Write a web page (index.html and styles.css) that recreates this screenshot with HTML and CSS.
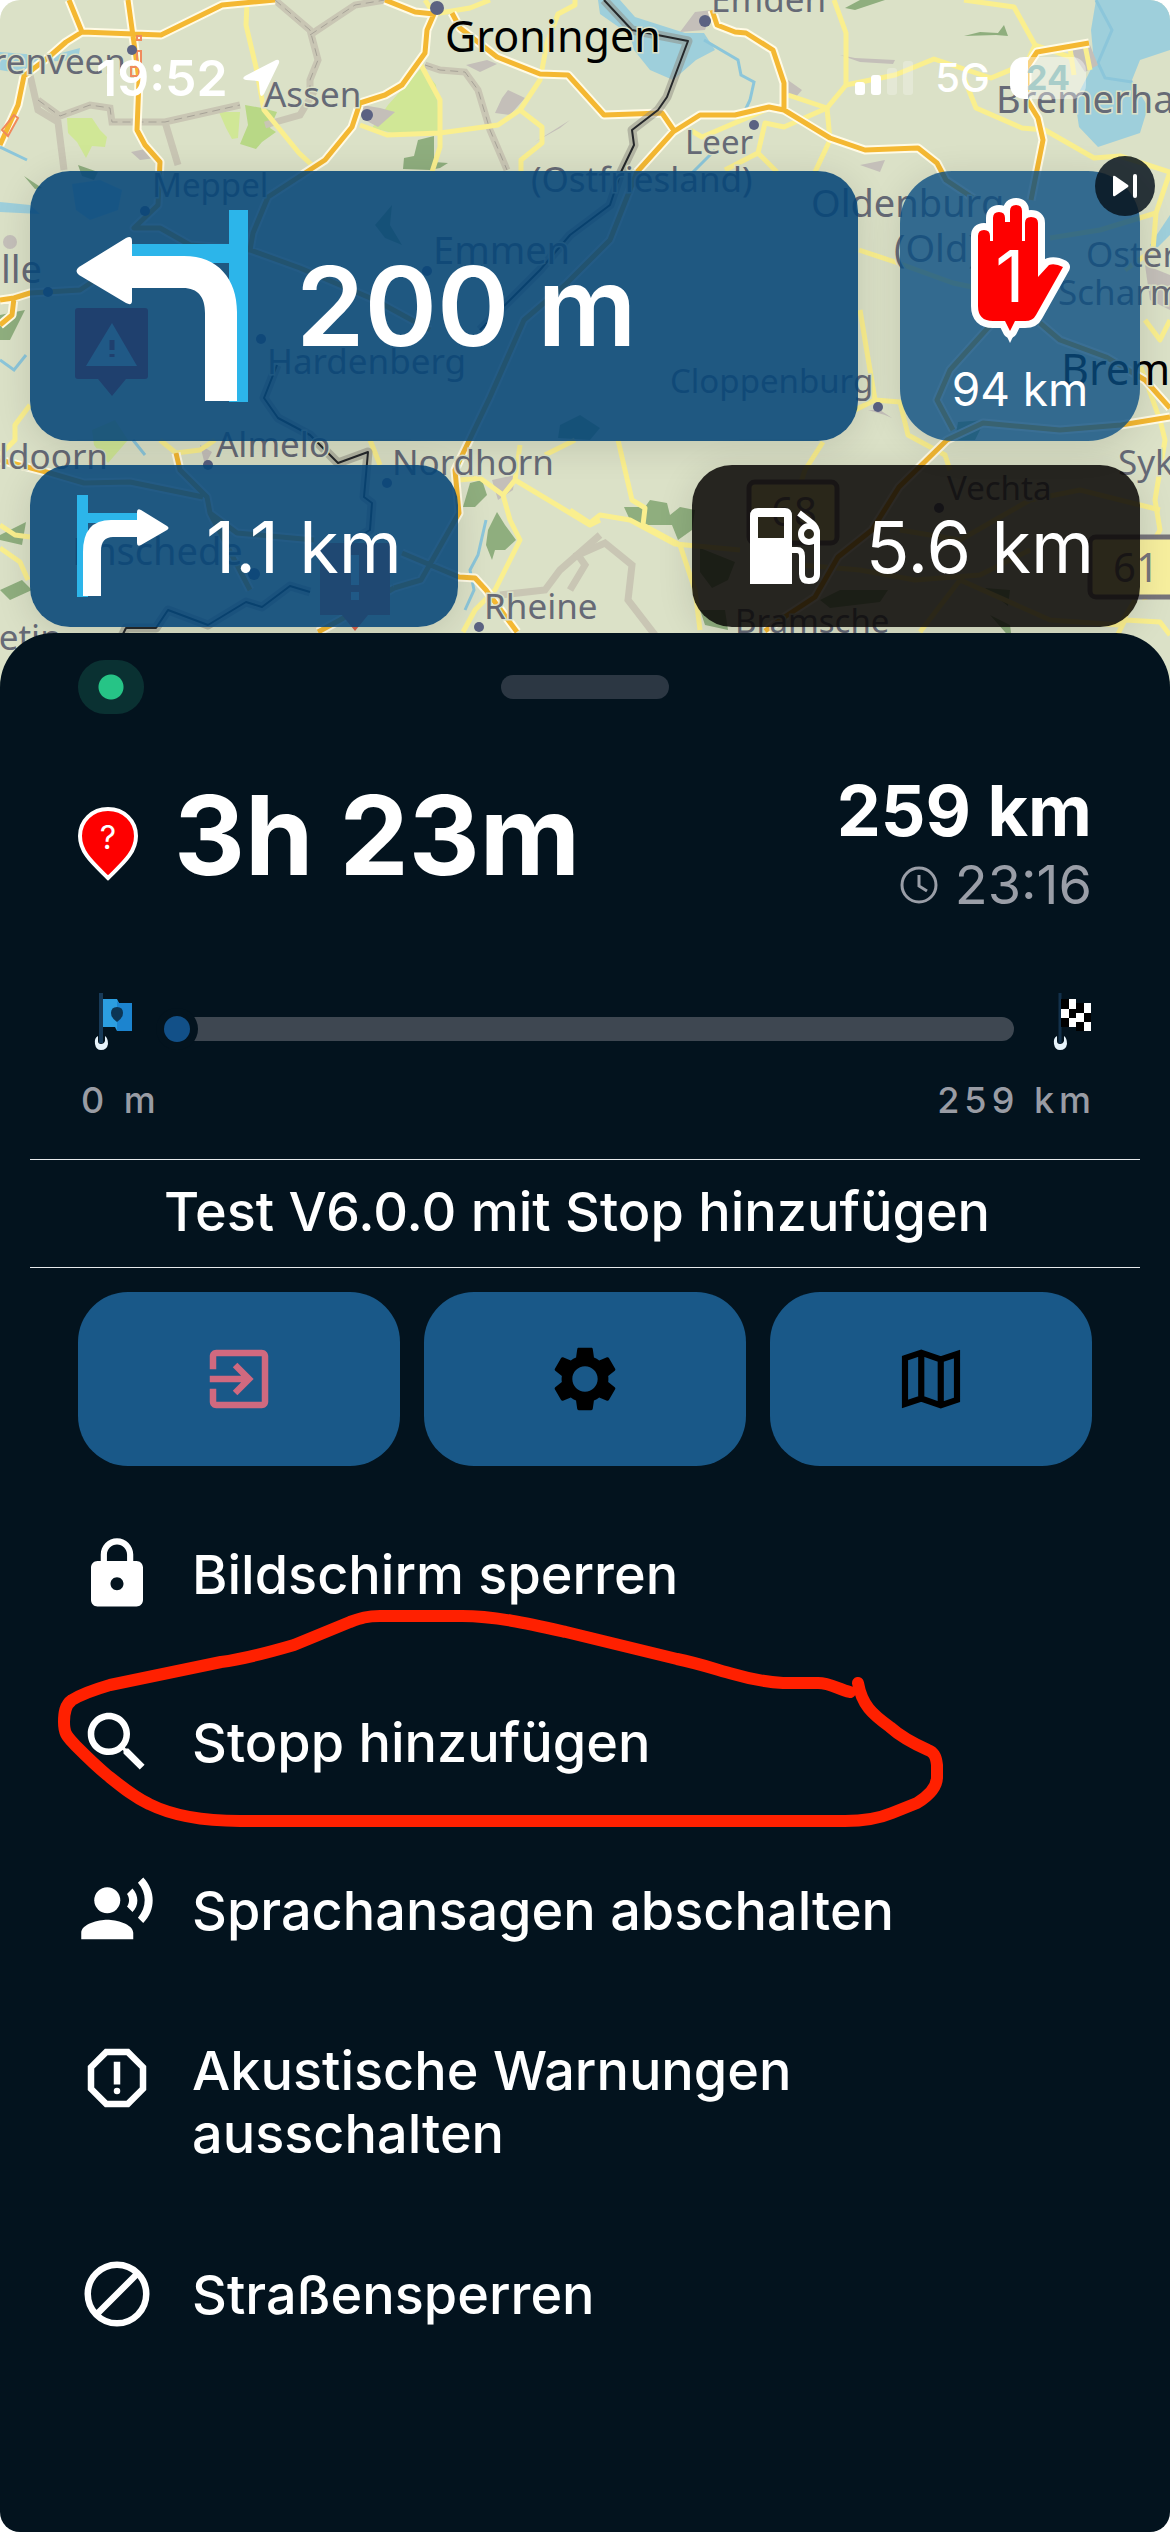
FILE: index.html
```html
<!DOCTYPE html>
<html lang="de">
<head>
    <meta charset="UTF-8">
    <meta name="viewport" content="width=device-width, initial-scale=1">
    <title>Navigation</title>
    <link rel="stylesheet" href="styles.css">
</head>
<body>
<div class="app">
    <!-- map -->
    <svg class="map" viewBox="0 0 1170 700" preserveAspectRatio="xMidYMin slice" aria-hidden="true">
        <defs>
            <path id="motorways" d="M69 0L82 32L134 34L161 35L222 5L275 0M82 32L66 42L50 56L24 76L18 105L0 145M128 0L134 43L139 80L137 130L145 145L160 162L158 205L134 228L160 228L190 245L250 250L300 268L375 300L430 330M385 0L415 12L434 14L427 30L425 53L402 85L385 95L360 103L352 127L325 160L268 197L253 233L250 250M452 13L460 28L497 57L540 74L568 75L604 115L662 113L675 132M637 172L673 132L700 115L735 115L769 107L784 110L830 138L865 150L918 148L937 163L946 180L976 200M712 10L717 25L735 32L746 33L773 50L784 83V110M637 172L610 240L565 285L524 320L490 397L455 470L459 513L421 580L394 588M1089 43L1037 52L1027 67V100L1038 118L1043 140L1031 200M765 631L780 620L815 597L838 557L872 530L899 487L947 440L983 423L1060 430L1121 425L1170 417M995 320L950 370L937 400L953 430M1040 323L1060 340L1106 357L1145 380L1170 408M0 460L50 473L84 483L130 482L203 497M176 453L180 470L207 497L210 513L237 533L314 540M210 513L250 590M402 553L459 577L475 578L486 590L517 632M318 632L340 620L394 588M0 300L14 298L30 293L80 290L110 270M14 298L12 315L0 325"/>
            <path id="border" d="M604 0L632 30L688 41L667 97L658 110L632 130L634 145L621 172L610 205L570 235L540 270L510 300L480 330M277 365L264 398L278 418L310 435L338 463L368 452L364 497L372 503L370 530L345 545M310 592L290 586L262 607L246 602L208 625L168 610L156 628L126 628L120 640"/>
        </defs>
        <rect width="1170" height="700" fill="#dbe1c7"/>
        <g fill="#9ecfdb">
            <path d="M1096 0H1170V50L1140 60L1132 80L1148 107L1140 133L1098 147L1079 127L1075 100L1087 77L1094 63L1091 30Z"/>
            <path d="M598 0H620L635 17L685 33L704 33L715 50L696 60L673 80L650 70L634 50L630 35L600 14Z"/>
            <path d="M0 52L50 56L80 48L78 60L40 62L24 74L0 70Z"/>
            <path d="M0 202L30 205L40 214L0 212Z"/>
            <path d="M72 184L100 180L122 190L118 210L90 220L76 210Z"/>
            <path d="M1150 245L1170 215V235L1155 250Z"/>
        </g>
        <g fill="none" stroke="#8cc6da" stroke-width="3">
            <path d="M704 40L738 60L741 75L754 82L750 100L742 117"/>
            <path d="M0 147L27 160M0 360L14 370L26 355M486 520L478 555L470 570L474 590L465 610"/>
            <path d="M715 150L690 175M133 440L145 455"/>
            <path d="M1096 0L1112 30L1098 63L1105 78L1132 82"/>
        </g>
        <g fill="#d0e796">
            <path d="M67 118L92 118L100 130L107 137L105 147L92 146L86 158L77 142L68 133Z"/>
            <path d="M422 67L436 85L440 132L405 136L372 128L388 105Z"/>
            <path d="M92 430L115 420L128 440L108 463L94 445Z"/>
            <path d="M219 112L240 112L238 138L232 139L226 128Z"/>
        </g>
        <g fill="#b8d886">
            <path d="M245 105L262 108L277 112L270 128L276 132L262 142L256 149L240 144L248 125Z"/>
        </g>
        <g fill="#8fae7e">
            <path d="M418 140L434 136L434 162L448 163L440 168L430 170L403 169L404 158L414 156Z"/>
            <path d="M24 176L42 188L35 189ZM78 165L98 172L94 180L82 176Z"/>
            <path d="M845 8L860 0H885L855 10ZM964 36L980 32L998 33L1004 25L1008 36L996 35Z"/>
            <path d="M463 507L470 483L482 480L487 495L475 507Z"/>
            <path d="M488 530L497 512L505 525L516 540L505 550H495L492 560L486 545Z"/>
            <path d="M624 507L645 507L650 500L667 503L670 515L680 507L695 510L692 530L678 540L672 525L645 525L630 520Z"/>
            <path d="M700 548L735 562L728 580L712 588L700 572Z"/>
            <path d="M0 535L26 522L22 545L0 540ZM0 590L22 580L32 590L10 600Z"/>
            <path d="M820 600L840 590L888 590L880 602L830 608ZM985 588L1010 590L1008 606Z"/>
            <path d="M700 610L725 610L728 630L705 625ZM990 615L1010 625L1012 640Z"/>
            <path d="M958 422L985 420L975 440L955 440Z"/>
            <path d="M0 315L25 310L10 340L0 340Z"/>
            <path d="M560 425L580 415L600 428L590 440L558 438Z"/>
            <path d="M375 225L392 205L390 225L402 245L385 238Z"/>
        </g>
        <g fill="#c4bfb9">
            <path d="M508 90L525 98L510 115L495 113L502 98ZM466 65L487 60L497 64L480 72Z"/>
            <path d="M535 142L570 120L560 128ZM131 152L150 148L155 158L140 160Z"/>
            <path d="M362 105L380 108L395 112L378 127L365 120Z"/>
            <path d="M785 78L802 90L795 98L786 92ZM840 55L855 58L895 60L893 64L860 62Z"/>
            <path d="M860 165L885 160L880 172Z"/>
            <path d="M680 32L695 12L712 10L705 30ZM1070 50L1090 45L1098 65L1085 72Z"/>
            <path d="M492 480L515 475L513 490L498 500ZM200 445L212 452L205 465ZM868 410L885 415L892 418L880 410Z"/>
            <path d="M1145 265L1170 275V310L1150 300Z"/>
            <circle cx="10" cy="242" r="7"/>
        </g>
        <!-- province borders -->
        <g fill="none" stroke="#c9c6b4" stroke-width="7">
            <path d="M275 0L310 30L318 60L310 80V95"/>
            <path d="M310 35L355 5L385 0M30 75L38 110L58 122L64 170"/>
            <path d="M38 100L60 116L90 105L110 108L112 122L165 122L240 105M165 122L178 165"/>
            <path d="M425 65L440 70L465 72L478 90L490 130L507 170M265 125L300 115L315 90"/>
            <path d="M570 590L585 565L578 555L605 543L632 565L628 600L655 635"/>
            <path d="M500 595L545 590L560 570L600 535"/>
        </g>
        <g fill="none" stroke="#a6a297" stroke-width="1" stroke-dasharray="8 5">
            <path d="M275 0L310 30L318 60L310 80V95M310 35L355 5L385 0"/>
            <path d="M38 100L60 116L90 105L110 108L112 122L165 122L240 105"/>
            <path d="M425 65L440 70L465 72L478 90L490 130L507 170"/>
        </g>
        <g class="yellow-roads">
            <path d="M247 3L246 25L256 67L264 110L299 153L314 167"/>
            <path d="M421 65L440 100V147L432 172"/>
            <path d="M360 125L387 135L440 133L498 125L520 110L540 80L547 43L558 14L575 5V0"/>
            <path d="M520 110L542 127V143L521 160V172"/>
            <path d="M425 0L434 14L470 8L490 0"/>
            <path d="M834 0L846 33V85L827 108L830 140L815 172"/>
            <path d="M846 85L895 75L934 59L991 78L1027 63"/>
            <path d="M788 95L827 108L784 127L765 123L758 153L777 172M758 153L725 170"/>
            <path d="M690 130L702 137L765 110"/>
            <path d="M964 0L1014 7L1035 45L1070 57M1035 45L1028 60"/>
            <path d="M964 78L976 108L1022 128L1045 130L1094 158L1120 156L1170 172L1156 213L1153 250L1125 270"/>
            <path d="M1070 48L1074 75M1085 45L1090 70"/>
            <path d="M859 250L895 262L953 283L1010 295M1050 238L1100 230L1156 213"/>
            <path d="M860 310L875 400L900 402L908 435L945 455L950 470"/>
            <path d="M823 442L805 470L795 500M875 400L855 410"/>
            <path d="M618 440L632 500L645 508L643 525L680 545L695 590L700 630"/>
            <path d="M570 510L590 523L600 515L630 520L675 544L740 550"/>
            <path d="M30 405L15 425V440L0 455M0 525L15 535L30 537M0 548L20 562L28 580"/>
            <path d="M160 440L176 453L200 450L215 440M370 440L380 465"/>
            <path d="M459 480L480 478L503 495L510 520L520 540L495 590L475 610L463 632"/>
            <path d="M503 495L515 480L565 510L590 525L600 520M515 480L520 445M545 455L575 440"/>
            <path d="M1140 365L1160 420L1165 440L1155 500L1160 530L1140 565L1145 600"/>
            <path d="M900 530L960 540L1030 500L1080 490L1160 510"/>
            <path d="M960 580L920 632M960 580L1050 620L1120 625L1135 600"/>
            <path d="M1110 650L1125 620L1160 622L1170 635"/>
            <path d="M800 565L860 570L915 580L980 575L1030 550"/>
            <path d="M1145 320L1160 340L1170 320"/>
        </g>
        <use href="#motorways" class="motorway-case"/>
        <use href="#motorways" class="motorway-fill"/>
        <use href="#border" class="border-glow"/>
        <use href="#border" class="border-line"/>
        <path d="M137 36H141V40H137ZM137 51H141V66H137ZM131 67H139V76H131ZM14 115L18 118L8 136L2 130Z" fill="none" stroke="#f08a5d" stroke-width="2"/>
        <g fill="#5b6282">
            <circle cx="132" cy="50" r="5"/>
            <circle cx="437" cy="8" r="7"/>
            <circle cx="367" cy="115" r="6"/>
            <circle cx="705" cy="21" r="6"/>
            <circle cx="754" cy="125" r="5"/>
            <circle cx="878" cy="407" r="5"/>
            <circle cx="208" cy="465" r="5"/>
            <circle cx="387" cy="483" r="5"/>
            <circle cx="939" cy="508" r="5"/>
            <circle cx="479" cy="627" r="5"/>
            <circle cx="145" cy="211" r="5"/>
            <circle cx="48" cy="292" r="5"/>
            <circle cx="261" cy="339" r="5"/>
            <circle cx="427" cy="271" r="5"/>
            <circle cx="254" cy="574" r="6"/>
        </g>
        <g class="shield">
            <rect x="749" y="482" width="88" height="61" rx="6"/>
            <rect x="1090" y="537" width="90" height="60" rx="6"/>
            <text x="771" y="526">68</text>
            <text x="1113" y="582">61</text>
        </g>
        <g class="town">
            <text x="126" y="74" text-anchor="end">Heerenveen</text>
            <text x="264" y="107">Assen</text>
            <text x="711" y="12">Emden</text>
            <text x="433" y="264" class="mid">Emmen</text>
            <text x="996" y="113" class="mid">Bremerhaven</text>
            <text x="811" y="217" class="mid">Oldenburg</text>
            <text x="894" y="262" class="mid">(Old)</text>
            <text x="42" y="283" text-anchor="end" class="mid">Zwolle</text>
            <text x="72" y="565" class="mid">Enschede</text>
            <text x="108" y="469" text-anchor="end">Apeldoorn</text>
            <text x="216" y="457">Almelo</text>
            <text x="267" y="374">Hardenberg</text>
            <text x="484" y="619">Rheine</text>
            <text x="685" y="154" class="small">Leer</text>
            <text x="531" y="192">(Ostfriesland)</text>
            <text x="152" y="197" class="small">Meppel</text>
            <text x="1086" y="267">Osterholz-</text>
            <text x="1058" y="305">Scharmbeck</text>
            <text x="670" y="393" class="small">Cloppenburg</text>
            <text x="392" y="475">Nordhorn</text>
            <text x="1118" y="475">Syke</text>
            <text x="947" y="500" class="small">Vechta</text>
            <text x="735" y="633" class="small">Bramsche</text>
            <text x="-48" y="650">Doetin</text>
            <text x="445" y="52" class="city">Groningen</text>
            <text x="1061" y="385" class="city">Bremen</text>
        </g>
        <!-- hazard pins -->
        <path d="M78 308H145Q148 308 148 311V376Q148 379 145 379H126L112 396L98 379H78Q75 379 75 376V311Q75 308 78 308Z" fill="#d8212a"/>
        <path d="M112 323L137 366H86Z" fill="#e4e8ec"/>
        <path d="M112 340V350M112 354V357" stroke="#d8212a" stroke-width="5"/>
        <path d="M320 543H390V615H368L355 631L342 615H320Z" fill="#d8604a"/>
        <path d="M355 555V585M355 592V600" stroke="#e4e8ec" stroke-width="8"/>
    </svg>

    <header class="status">
        <time class="status-time">19:52</time>
        <svg class="status-arrow" viewBox="0 0 38 38" aria-hidden="true"><path d="M34 1L3 17Q-1 20 4 21L16 22Q17 22 17 24L18 35Q19 39 22 35L37 4Q38 0 34 1Z" fill="#fff"/></svg>
        <svg class="status-signal" viewBox="0 0 60 36" fill="#fff" aria-hidden="true">
            <rect x="0" y="22" width="10" height="13" rx="3"/>
            <rect x="16" y="15" width="10" height="20" rx="3"/>
            <rect x="32" y="8" width="10" height="27" rx="3" opacity=".25"/>
            <rect x="48" y="1" width="10" height="34" rx="3" opacity=".25"/>
        </svg>
        <span class="status-net">5G</span>
        <span class="battery">24</span>
    </header>

    <section class="guidance">
        <div class="guidance-row">
            <div class="card next-turn">
                <svg class="turn-icon" viewBox="0 0 174 194" aria-hidden="true">
                    <path d="M153 1H172V193H153V54H56V35H153Z" fill="#2cb5ea"/>
                    <path d="M50 29Q56 26 56 32V47H108C142 47 161 70 161 103V192H129V104C129 88 122 79 107 79H56V92Q56 97 50 94L3 66Q-2 62 3 58Z" fill="#fff"/>
                </svg>
                <span class="turn-distance">200 m</span>
            </div>
            <div class="card stop-card">
                <svg class="hand-icon" viewBox="0 0 106 152" aria-hidden="true">
                    <path d="M11 42Q11 36 17 36Q23 36 23 42V47H26V24Q26 18 32 18Q38 18 38 24H43V17Q43 11 49 11Q55 11 55 17V47H58V29Q58 23 64 23Q71 23 71 29V83L82 71Q88 69 96 73L69 121Q66 127 58 127H48L43 137L38 127H26Q11 127 11 112Z" fill="#fff" stroke="#fff" stroke-width="14" stroke-linejoin="round"/>
                    <path d="M34 130L43 149L52 130Z" fill="#fff"/>
                    <path d="M11 42Q11 36 17 36Q23 36 23 42V47H26V24Q26 18 32 18Q38 18 38 24V28H43V17Q43 11 49 11Q55 11 55 17V47H58V29Q58 23 64 23Q71 23 71 29V83L82 71Q88 69 96 73L69 121Q66 127 58 127H48L43 137L38 127H26Q11 127 11 112Z" fill="#fe0000"/>
                    <text x="43" y="108" text-anchor="middle">1</text>
                </svg>
                <span class="stop-distance">94 km</span>
                <button class="skip" type="button" aria-label="Stopp überspringen">
                    <svg viewBox="0 0 60 60" aria-hidden="true"><path d="M18 21Q18 19 20 20L33 29Q34 30 33 31L20 40Q18 41 18 39Z" fill="#fff"/><path d="M40 20V40" stroke="#fff" stroke-width="4" stroke-linecap="round"/></svg>
                </button>
            </div>
        </div>
        <div class="guidance-row guidance-row-small">
            <div class="card then-turn">
                <svg class="then-icon" viewBox="0 0 94 102" aria-hidden="true">
                    <path d="M1 0H12V18H63V28H12V102H1Z" fill="#2cb5ea"/>
                    <path d="M61 17Q61 13 65 15L91 31Q94 33 91 35L65 50Q61 52 61 48V42H37Q25 42 25 56V101H7V57Q7 25 35 25H61Z" fill="#fff"/>
                </svg>
                <span>1.1 km</span>
            </div>
            <div class="card fuel">
                <svg class="fuel-icon" viewBox="0 0 70 76" aria-hidden="true">
                    <path d="M8 0H35Q42 0 42 8V76H0V8Q0 0 8 0ZM8 9V30H34V9Z" fill="#fff" fill-rule="evenodd"/>
                    <g fill="none" stroke="#fff" stroke-width="6">
                        <path d="M42 42H47Q52 42 52 48V66Q52 73 59 73Q67 73 67 66V25Q67 19 62 15L49 5"/>
                        <circle cx="59" cy="26" r="8"/>
                    </g>
                </svg>
                <span>5.6 km</span>
            </div>
        </div>
    </section>

    <main class="sheet">
        <div class="sheet-top">
            <span class="gps"></span>
            <span class="handle"></span>
        </div>

        <div class="summary">
            <svg class="pin" viewBox="0 0 60 74" aria-hidden="true">
                <path d="M30 2C46 2 58 14 58 29C58 46 44 57 30 71C16 57 2 46 2 29C2 14 14 2 30 2Z" fill="#fe0000" stroke="#fff" stroke-width="4"/>
                <text x="30" y="42" text-anchor="middle">?</text>
            </svg>
            <span class="duration">3h 23m</span>
            <div class="arrival">
                <div class="total">259 km</div>
                <div class="eta">
                    <svg viewBox="0 0 40 40" fill="none" stroke="currentColor" stroke-width="3" aria-hidden="true"><circle cx="20" cy="20" r="17"/><path d="M20 10V21L28 26"/></svg>
                    <time>23:16</time>
                </div>
            </div>
        </div>

        <div class="progress">
            <svg class="flag-start" viewBox="-3 0 60 72" aria-hidden="true">
                <path d="M20 0V50" stroke="#173a58" stroke-width="4"/>
                <path d="M22 6H36L38 10H51V38H36L34 34H22Z" fill="#2c9ee0"/>
                <path d="M36 8L38 10H51V38H36Z" fill="#1c84cf"/>
                <path d="M36 14Q42 14 42 20Q42 25 36 29Q30 25 30 20Q30 14 36 14Z" fill="#0c3554"/>
                <path d="M17 43Q13 45 14 51Q15 57 20 57Q26 57 27 51Q27 45 24 43V48Q23 51 20 51Q17 51 17 48Z" fill="#e8f4fb"/>
            </svg>
            <input class="track" type="range" min="0" max="259" value="0" aria-label="Zurückgelegte Strecke">
            <svg class="flag-end" viewBox="0 0 52 72" aria-hidden="true">
                <path d="M20 0V50" stroke="#12304a" stroke-width="3"/>
                <path d="M21 6H36V10H51V38H36V34H21Z" fill="#000"/>
                <path d="M29 6H36V16H29ZM21 16H29V25H21ZM29 25H36V34H29ZM44 10H51V20H44ZM36 20H44V29H36ZM44 29H51V38H44Z" fill="#fff"/>
                <path d="M17 43Q13 45 14 51Q15 57 20 57Q26 57 27 51Q27 45 24 43V48Q23 51 20 51Q17 51 17 48Z" fill="#e8f4fb"/>
            </svg>
        </div>
        <div class="progress-labels">
            <span>0 m</span>
            <span>259 km</span>
        </div>

        <h1 class="route-name">Test V6.0.0 mit Stop hinzufügen</h1>

        <div class="actions">
            <button class="action action-exit" type="button" aria-label="Beenden">
                <svg viewBox="0 0 24 24" aria-hidden="true"><path d="M10.09 15.59L11.5 17l5-5-5-5-1.41 1.41L12.67 11H3v2h9.67l-2.58 2.59zM19 3H5c-1.11 0-2 .9-2 2v4h2V5h14v14H5v-4H3v4c0 1.1.89 2 2 2h14c1.1 0 2-.9 2-2V5c0-1.1-.9-2-2-2z"/></svg>
            </button>
            <button class="action" type="button" aria-label="Einstellungen">
                <svg viewBox="0 0 24 24" aria-hidden="true"><path d="M19.14 12.94c.04-.3.06-.61.06-.94 0-.32-.02-.64-.07-.94l2.03-1.58c.18-.14.23-.41.12-.61l-1.92-3.32c-.12-.22-.37-.29-.59-.22l-2.39.96c-.5-.38-1.03-.7-1.62-.94l-.36-2.54c-.04-.24-.24-.41-.48-.41h-3.84c-.24 0-.43.17-.47.41l-.36 2.54c-.59.24-1.13.57-1.62.94l-2.39-.96c-.22-.08-.47 0-.59.22L2.74 8.87c-.12.21-.08.47.12.61l2.03 1.58c-.05.3-.09.63-.09.94s.02.64.07.94l-2.03 1.58c-.18.14-.23.41-.12.61l1.92 3.32c.12.22.37.29.59.22l2.39-.96c.5.38 1.03.7 1.62.94l.36 2.54c.05.24.24.41.48.41h3.84c.24 0 .44-.17.47-.41l.36-2.54c.59-.24 1.13-.56 1.62-.94l2.39.96c.22.08.47 0 .59-.22l1.92-3.32c.12-.22.07-.47-.12-.61l-2.01-1.58zM12 15.9c-2.15 0-3.9-1.75-3.9-3.9s1.75-3.9 3.9-3.9 3.9 1.75 3.9 3.9-1.75 3.9-3.9 3.9z"/></svg>
            </button>
            <button class="action" type="button" aria-label="Karte">
                <svg viewBox="0 0 24 24" fill="none" aria-hidden="true"><path d="M4 5.6L9 3.9L15 6L20 4.3V18.4L15 20.1L9 18L4 19.7ZM9 4V18M15 6V20" fill="none" stroke="#000" stroke-width="1.9"/></svg>
            </button>
        </div>

        <nav class="menu">
            <button class="menu-item" type="button">
                <svg viewBox="0 0 24 24" aria-hidden="true"><path d="M18 8h-1V6c0-2.76-2.24-5-5-5S7 3.24 7 6v2H6c-1.1 0-2 .9-2 2v10c0 1.1.9 2 2 2h12c1.1 0 2-.9 2-2V10c0-1.1-.9-2-2-2zm-6 9c-1.1 0-2-.9-2-2s.9-2 2-2 2 .9 2 2-.9 2-2 2zm3.1-9H8.9V6c0-1.71 1.39-3.1 3.1-3.1s3.1 1.39 3.1 3.1v2z"/></svg>
                <span>Bildschirm sperren</span>
            </button>
            <button class="menu-item" type="button">
                <svg viewBox="0 0 24 24" aria-hidden="true"><path d="M15.5 14h-.79l-.28-.27C15.41 12.59 16 11.11 16 9.5 16 5.91 13.09 3 9.5 3S3 5.91 3 9.5 5.91 16 9.5 16c1.61 0 3.09-.59 4.23-1.57l.27.28v.79l5 4.99L20.49 19l-4.99-5zm-6 0C7.01 14 5 11.99 5 9.5S7.01 5 9.5 5 14 7.01 14 9.5 11.99 14 9.5 14z"/></svg>
                <span>Stopp hinzufügen</span>
            </button>
            <button class="menu-item" type="button">
                <svg viewBox="0 0 24 24" aria-hidden="true"><circle cx="9" cy="9" r="4"/><path d="M9 15c-2.67 0-8 1.34-8 4v2h16v-2c0-2.66-5.33-4-8-4zm7.76-9.64l-1.68 1.69c.84 1.18.84 2.71 0 3.89l1.68 1.69c2.02-2.02 2.02-5.07 0-7.27zM20.07 2l-1.63 1.63c2.77 3.02 2.77 7.56 0 10.74L20.07 16c3.9-3.89 3.91-9.95 0-14z"/></svg>
                <span>Sprachansagen abschalten</span>
            </button>
            <button class="menu-item" type="button">
                <svg viewBox="0 0 24 24" aria-hidden="true"><path d="M15.73 3H8.27L3 8.27v7.46L8.27 21h7.46L21 15.73V8.27L15.73 3zM19 14.9L14.9 19H9.1L5 14.9V9.1L9.1 5h5.8L19 9.1v5.8z"/><circle cx="12" cy="16" r="1"/><path d="M11 7h2v7h-2z"/></svg>
                <span>Akustische Warnungen ausschalten</span>
            </button>
            <button class="menu-item" type="button">
                <svg viewBox="0 0 24 24" fill="none" aria-hidden="true"><path d="M18 6L6 18M21 12A9 9 0 1 1 3 12A9 9 0 1 1 21 12Z" fill="none" stroke="#fff" stroke-width="2"/></svg>
                <span>Straßensperren</span>
            </button>

            <!-- hand-drawn mark round the second entry -->
            <svg class="mark" viewBox="0 1490 1170 890" aria-hidden="true">
                <path d="M850 1692C838 1689 830 1683 818 1683H783C765 1682 750 1679 733 1674C715 1669 697 1663 677 1659L566 1632C530 1624 495 1616 462 1616H380C367 1616 361 1618 350 1622L294 1645C270 1652 245 1659 221 1662L110 1685C93 1690 80 1695 72 1700C65 1705 64 1713 64 1722C64 1735 68 1737 76 1746C90 1760 95 1765 107 1775C122 1787 134 1797 149 1804C175 1817 205 1821 240 1821H845C865 1821 880 1818 892 1813L917 1803C930 1795 937 1787 937 1777V1765C936 1755 933 1752 928 1750C910 1742 900 1736 890 1727C872 1714 862 1705 858 1683"/>
            </svg>
        </nav>
    </main>
</div>
</body>
</html>
```
FILE: styles.css
```css
*{
    box-sizing: border-box;
}
body{
    margin:0;
    background:#fff;
    color:#fff;
    font-family: Inter, "Liberation Sans", sans-serif;
}
button{
    border:0;
    padding:0;
    color:inherit;
    font:inherit;
    cursor:pointer;
}
svg{
    display:block;
    flex:none;
}
.app{
    position: relative;
    display:flex;
    flex-direction: column;
    min-height:100vh;
    border-radius:20px;
    overflow: hidden;
}

/* map */
.map{
    position: absolute;
    left:0;
    top:0;
    width:100%;
    height:700px;
}
.yellow-roads{
    fill:none;
    stroke:#faef8e;
    stroke-width:5px;
    stroke-linejoin:round;
}
.motorway-case, .motorway-fill{
    fill:none;
    stroke-linejoin:round;
}
.motorway-case{
    stroke:#fffbe6;
    stroke-width:9px;
}
.motorway-fill{
    stroke:#f4b832;
    stroke-width:5px;
}
.border-glow, .border-line{
    fill:none;
    stroke-linejoin:round;
}
.border-glow{
    stroke:#8d8b81;
    stroke-width:9px;
    opacity:.5;
}
.border-line{
    stroke:#25282a;
    stroke-width:2px;
}
.town{
    font-family:"Noto Sans", sans-serif;
    font-size:35px;
    fill:#666a76;
    stroke:#dbe1c7;
    stroke-width:3px;
    paint-order:stroke;
}
.town .small{
    font-size:33px;
}
.town .mid{
    font-size:38px;
}
.town .city{
    font-size:43px;
    fill:#000;
}
.shield{
    font-family:"Noto Sans", sans-serif;
    font-size:40px;
    fill:#77757a;
}
.shield rect{
    fill:#f7ef9e;
    stroke:#77757a;
    stroke-width:5px;
}

/* status bar */
.status{
    position: relative;
    display:flex;
    align-items: center;
    padding:48px 84px 63px 96px;
    line-height:60px;
}
.status-time{
    font-size:50px;
    font-weight:600;
}
.status-arrow{
    width:38px;
    height:38px;
    margin-left:14px;
}
.status-signal{
    width:60px;
    height:36px;
    margin-left:auto;
}
.status-net{
    margin:0 20px;
    font-size:40px;
    font-weight:500;
}
.battery{
    width:76px;
    height:42px;
    border-radius:14px;
    background:linear-gradient(90deg, #fff 24%, rgba(255,255,255,.4) 24%);
    color:#a9cdc9;
    font-size:34px;
    font-weight:700;
    line-height:42px;
    text-align:center;
}

/* turn cards */
.guidance{
    position: relative;
    padding:0 30px 6px;
}
.guidance-row{
    display:flex;
    gap:42px;
}
.guidance-row-small{
    justify-content: space-between;
    margin-top:24px;
}
.card{
    display:flex;
    align-items: center;
    border-radius:40px;
    background:rgba(5,68,120,.88);
    box-shadow:0 6px 36px rgba(0,0,0,.12);
}
.next-turn{
    flex:1;
    min-height:270px;
    padding:0 46px;
    gap:46px;
}
.turn-icon{
    width:174px;
    height:194px;
}
.turn-distance{
    font-size:110px;
    font-weight:600;
}
.stop-card{
    position: relative;
    flex-direction: column;
    width:240px;
    padding-top:23px;
    border-radius:52px;
    background:rgba(9,76,129,.8);
}
.hand-icon{
    width:106px;
    height:152px;
}
.hand-icon text{
    font-size:72px;
    fill:#fff;
}
.stop-distance{
    margin-top:10px;
    font-size:46px;
    line-height:66px;
}
.skip{
    position: absolute;
    right:-15px;
    top:-15px;
    width:60px;
    height:60px;
    border-radius:50%;
    background:rgba(8,20,30,.85);
}
.then-turn, .fuel{
    min-height:162px;
    font-size:72px;
}
.then-turn{
    padding:0 56px 0 46px;
    gap:36px;
}
.then-icon{
    width:94px;
    height:102px;
}
.fuel{
    padding:0 46px 0 58px;
    gap:46px;
    background:rgba(8,6,5,.86);
}
.fuel-icon{
    width:70px;
    height:76px;
}

/* bottom sheet */
.sheet{
    position: relative;
    flex:1;
    padding-top:27px;
    border-radius:54px 54px 0 0;
    background:#03131e;
}
.sheet-top{
    display:grid;
    grid-template-columns:1fr auto 1fr;
    align-items: center;
    padding:0 78px;
}
.gps{
    width:66px;
    height:54px;
    border-radius:27px;
    background:radial-gradient(circle, #26c486 12px, #0a3132 13px);
}
.handle{
    width:168px;
    height:24px;
    border-radius:12px;
    background:#2c3743;
}
.summary{
    display:flex;
    align-items: flex-start;
    margin-top:60px;
    padding:0 78px;
}
.pin{
    width:60px;
    height:74px;
    margin-top:33px;
}
.pin text{
    font-size:32px;
    fill:#fff;
}
.duration{
    margin-left:36px;
    font-size:110px;
    font-weight:700;
    line-height:122px;
}
.arrival{
    margin-left:auto;
    text-align:right;
    line-height:74px;
}
.total{
    font-size:70px;
    font-weight:700;
}
.eta{
    display:flex;
    align-items: center;
    justify-content: flex-end;
    gap:16px;
    color:#9a9ea7;
    font-size:54px;
}
.eta svg{
    width:40px;
    height:40px;
}
.progress{
    display:flex;
    align-items: center;
    gap:26px;
    margin-top:71px;
    padding:0 78px;
}
.flag-start{
    width:60px;
    height:72px;
}
.flag-end{
    width:52px;
    height:72px;
}
.track{
    flex:1;
    min-width:0;
    height:26px;
    margin:0;
    background:none;
    appearance:none;
}
.track::-webkit-slider-runnable-track{
    height:24px;
    border-radius:12px;
    background:#3e4751;
}
.track::-webkit-slider-thumb{
    width:26px;
    height:26px;
    margin-top:-1px;
    border-radius:50%;
    background:#125088;
    box-shadow:0 0 0 8px #03131e;
    appearance:none;
}
.progress-labels{
    display:flex;
    justify-content: space-between;
    margin-top:11px;
    padding:0 74px 0 81px;
    color:#999ca4;
    font-size:36px;
    font-weight:500;
    line-height:48px;
    letter-spacing:5px;
}
.route-name{
    margin:35px 30px 0;
    padding:20px 16px 24px 0;
    border:1px solid #e6e9eb;
    border-width:1px 0;
    font-size:54px;
    font-weight:500;
    line-height:63px;
    text-align:center;
}
.actions{
    display:grid;
    grid-template-columns:repeat(3, 1fr);
    gap:24px;
    margin-top:24px;
    padding:0 78px;
}
.action{
    display:flex;
    align-items: center;
    justify-content: center;
    height:174px;
    border-radius:50px;
    background:#195888;
}
.action svg{
    width:78px;
    height:78px;
}
.action-exit{
    fill:#d0697f;
}
.menu{
    position: relative;
    margin-top:24px;
}
.menu-item{
    display:flex;
    align-items: center;
    gap:36px;
    width:100%;
    padding:45px 240px 45px 78px;
    background:none;
    font-size:54px;
    font-weight:500;
    line-height:63px;
    text-align:left;
}
.menu-item svg{
    align-self: flex-start;
    width:78px;
    height:78px;
    fill:#fff;
}
.mark{
    position: absolute;
    left:0;
    top:0;
    width:100%;
    pointer-events: none;
}
.mark path{
    fill:none;
    stroke:#ff2000;
    stroke-width:12px;
    stroke-linecap:round;
    stroke-linejoin:round;
}
```
